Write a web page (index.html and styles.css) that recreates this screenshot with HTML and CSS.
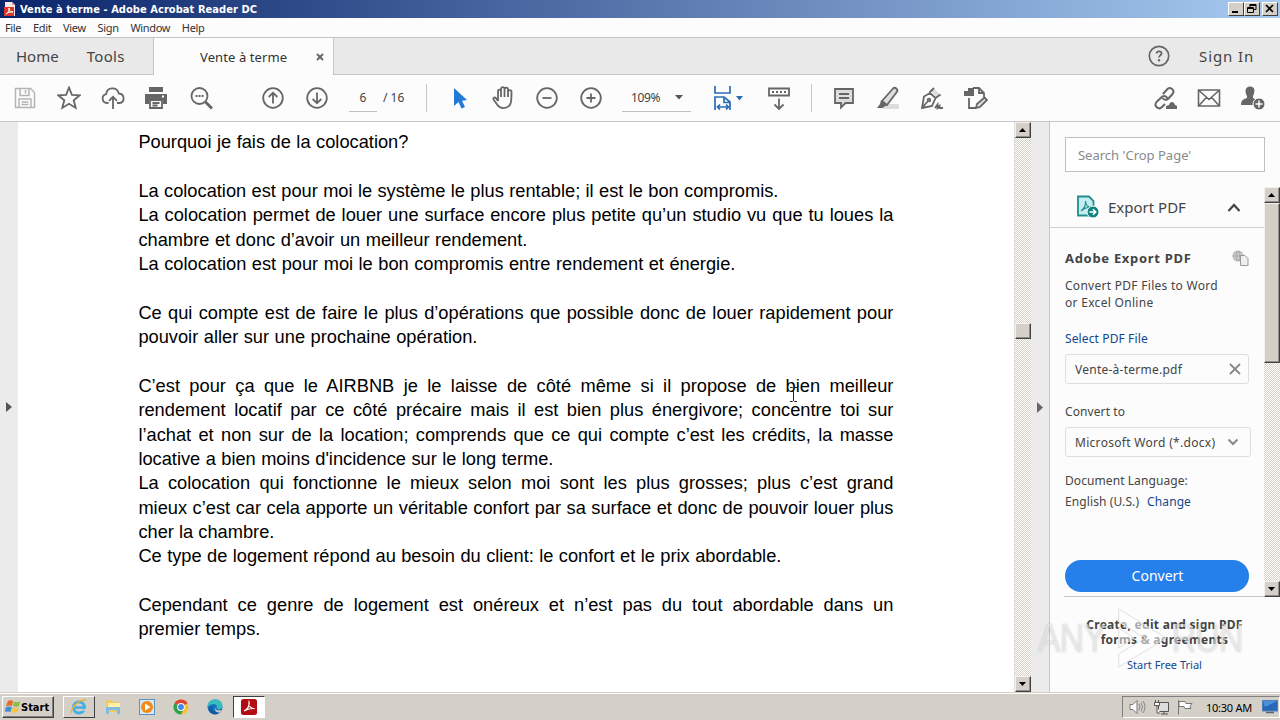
FILE: index.html
```html
<!DOCTYPE html>
<html lang="fr">
<head>
    <meta charset="UTF-8">
    <title>Vente à terme - Adobe Acrobat Reader DC</title>
    <link rel="stylesheet" href="styles.css">
</head>
<body>

    <!-- Window title -->
    <div class="titlebar">
        <svg class="app-icon" width="12" height="16" viewBox="0 0 12 16"><path d="M1 1h7l3 3v11H1z" fill="#f7e9e7"/><path d="M8 1v3h3" fill="#d99"/><rect x="0" y="6" width="10" height="9" fill="#d8382c"/><path d="M2 13c3-2 3-4 3-6 0 3 1 4 4 4-3 0-5 0-7 2z" fill="none" stroke="#fff" stroke-width="1"/></svg>
        <span class="title">Vente à terme - Adobe Acrobat Reader DC</span>
        <div class="win-btns">
            <span class="win-btn"><svg width="14" height="12"><path d="M3 8h6v2H3z"/></svg></span>
            <span class="win-btn"><svg width="14" height="12"><path d="M5 1.500h6v5H9M5 2.500h6M5 1v3M3 5.500h6M2.500 4.500h6v5h-6z" fill="none" stroke="#000"/></svg></span>
            <span class="win-btn gap"><svg width="14" height="12"><path d="M3 2l7 7M10 2l-7 7" stroke="#000" stroke-width="1.700"/></svg></span>
        </div>
    </div>

    <div class="menubar">
        <span>File</span><span>Edit</span><span>View</span><span>Sign</span><span>Window</span><span>Help</span>
    </div>

    <!-- Tabs -->
    <div class="tabs">
        <div class="tab-left"><span class="t-home">Home</span><span class="t-tools">Tools</span></div>
        <div class="tab-active"><span class="t-doc">Vente à terme</span><svg class="t-close" width="8" height="8"><path d="M1 1l6 6M7 1L1 7" stroke="#666" stroke-width="1.900"/></svg></div>
        <div class="tab-right">
            <svg width="22" height="22" viewBox="0 0 22 22"><circle cx="11" cy="11" r="9.700" fill="none" stroke="#666" stroke-width="1.700"/><path d="M8.500 8.500c.3-3 5.200-2.800 5 .1-.1 1.800-2.500 1.900-2.500 4" fill="none" stroke="#666" stroke-width="1.800"/><circle cx="11" cy="15.200" r="1.200" fill="#666"/></svg>
            <span class="t-signin">Sign In</span>
        </div>
    </div>

    <!-- Toolbar -->
    <div class="toolbar">
        <span class="tool light"><svg viewBox="0 0 24 24"><path d="M2.500 2.500h15l4 4v15h-19zM7 2.500v7h9v-7M12.500 4v3.500M6 21v-8h12v8M8.500 16h7M8.500 18.500h7"/></svg></span>
        <span class="tool"><svg viewBox="0 0 24 24"><path d="M12 1.500l2.900 7.300 7.800.5-6 5 2 7.600-6.700-4.200-6.700 4.200 2-7.600-6-5 7.800-.5z"/></svg></span>
        <span class="tool"><svg viewBox="0 0 24 24"><path d="M7.500 17H6a4.500 4.500 0 0 1-.8-8.900C6 .8 16 .5 17.800 7.500 24 8 24 16.500 18.500 17H16M12 23V11M8 14.800l4-4 4 4"/></svg></span>
        <span class="tool print"><svg viewBox="0 0 24 24"><path class="fill" d="M5 1h14v5H5zM1 8h22v10h-4v-4H5v4H1z"/><path d="M6 14h12v8H6zM8.500 17h7M8.500 19.500h5"/><path d="M18 10.500h2" stroke="#fff"/></svg></span>
        <span class="tool"><svg viewBox="0 0 24 24"><circle cx="10.500" cy="10" r="8"/><path d="M16.500 16l6.500 6.500" stroke-width="3"/><path d="M6.500 10h2m1 0h2m1 0h2" stroke-width="2"/></svg></span>
        <span class="tool up"><svg viewBox="0 0 24 24"><circle cx="12" cy="12" r="9.800"/><path d="M12 17.500V7M7.700 11L12 6.700l4.300 4.300"/></svg></span>
        <span class="tool"><svg viewBox="0 0 24 24"><circle cx="12" cy="12" r="9.800"/><path d="M12 6.500V17M7.700 13l4.300 4.300 4.300-4.300"/></svg></span>
        <span class="page-no">6</span>
        <span class="page-total">/ 16</span>
        <span class="divider first"></span>
        <span class="tool arrow"><svg viewBox="0 0 24 24"><path d="M7 2v18l4.500-4 3 6.500 3.500-1.600-3-6.200 5-.7z" fill="#2279d8" stroke="none"/></svg></span>
        <span class="tool hand"><svg viewBox="0 0 24 24"><path d="M6 15V5.500c0-2.500 3-2.500 3 0V11M9 11V3c0-2.500 3.500-2.500 3.500 0v8M12.500 11V3.500c0-2.500 3.500-2.500 3.500 0V11M16 11V6c0-2.500 3.500-2.500 3.500 0 0 3 0 6.500-.5 9.500-1 8-10.500 8-13.500 3.500L1.800 14c-1.300-2.300.8-3.300 2.300-1.700L6 15"/></svg></span>
        <span class="tool"><svg viewBox="0 0 24 24"><circle cx="12" cy="12" r="9.800"/><path d="M7.500 12h9"/></svg></span>
        <span class="tool"><svg viewBox="0 0 24 24"><circle cx="12" cy="12" r="9.800"/><path d="M7.500 12h9M12 7.500v9"/></svg></span>
        <span class="zoom"><span class="zoom-val">109%</span><svg width="8" height="5"><path d="M0 0h8L4 4.500z" fill="#555"/></svg></span>
        <span class="fit"><svg width="32" height="26" viewBox="0 0 32 26"><path d="M3 1v7h15V1M3 25V12h9l6 5v8M12 12v5.500h6M5.500 22h11M8 19.500L5.500 22 8 24.500M14 19.500l2.500 2.500-2.500 2.500" fill="none" stroke="#2b6cb5" stroke-width="1.700"/><path d="M24 11h7l-3.500 4.500z" fill="#2b6cb5"/></svg></span>
        <span class="tool scroll"><svg viewBox="0 0 24 24"><path d="M2 2.500h20v7H2zM12 12.500V23M7.500 18.500l4.500 4.500 4.500-4.500"/><path d="M5 6h2m2 0h2m2 0h2m2 0h2"/></svg></span>
        <span class="divider"></span>
        <span class="tool cmt"><svg viewBox="0 0 24 24"><path d="M3 3h18v14h-7.500L9 21.500V17H3z" fill="#ddd"/><path d="M7 8h10M7 12h10"/></svg></span>
        <span class="tool"><svg viewBox="0 0 24 24"><path d="M10 18h13v5H6z" fill="#ddd" stroke="none"/><path d="M6 15L17 2.500c2-2 5.500 1 4 3.200L11 19z" fill="#ddd"/><path class="fill" d="M5 14l6.500 5-3 1.500L6.500 22H1l3-4z"/></svg></span>
        <span class="tool"><svg viewBox="0 0 24 24"><path d="M14 2.500l6 6-4 2-5-5z" fill="#ddd" stroke="none"/><path d="M2 22l2-11.500 6-3.500 5.500 5L12 20zM2 22l6-7M9.500 6.500L14 2M15.500 12l5-3.500M15 22l2.500-3.500V22l2-2v2H23"/><circle cx="9" cy="14" r="1.300"/></svg></span>
        <span class="tool"><svg viewBox="0 0 24 24"><path d="M9 2h6l5 5v4M15 2v5h5M5 12v10h7"/><path class="fill" d="M4 2h6v8H0V5h4z"/><path d="M12 22l1-4 7.500-6.500 2.500 2.500-7 7z" fill="#ddd"/></svg></span>
        <span class="tool link"><svg viewBox="0 0 24 24"><path d="M10 8l4-4.500c3-3.500 8.500.5 5.500 4.500l-4 4.500c-2 2-4.500 1.500-6-.5M14.500 12c-2-2.500-4.500-2.500-6-.8L3.500 16c-3 4 2 8.500 5.500 5l3-3" stroke-width="2"/><path class="fill" d="M13 23v-3l3-1c1-4 5-4 6 0l2.500 1v3z"/></svg></span>
        <span class="tool"><svg viewBox="0 0 24 24"><path d="M1.500 4h21v16h-21zM2 4.500l10 9 10-9M2 19.500l7.500-8.300M22 19.500l-7.500-8.300" stroke-width="1.600"/></svg></span>
        <span class="tool"><svg viewBox="0 0 24 24"><path class="fill" d="M9 .5c5 0 5.500 5 3 9.500v2l4 2-4 5H0c0-5 2-5.500 6-7v-2C3.500 6 4 .5 9 .5z"/><circle cx="18" cy="18" r="6" fill="#666" stroke="#fcfcfc" stroke-width="1"/><path d="M18 14.500v7M14.500 18h7" stroke="#fff" stroke-width="1.500"/></svg></span>
    </div>

    <!-- Document, scrollbar and tools pane -->
    <div class="main">
        <div class="rail"><svg width="6" height="10"><path d="M0 0v10l6-5z" fill="#555"/></svg></div>
        <div class="page">
            <p class="l w270">Pourquoi je fais de la colocation?</p>
            <p class="l">&nbsp;</p>
            <p class="l w640">La colocation est pour moi le système le plus rentable; il est le bon compromis.</p>
            <p class="l">La colocation permet de louer une surface encore plus petite qu’un studio vu que tu loues la</p>
            <p class="l w389">chambre et donc d’avoir un meilleur rendement.</p>
            <p class="l w597">La colocation est pour moi le bon compromis entre rendement et énergie.</p>
            <p class="l">&nbsp;</p>
            <p class="l">Ce qui compte est de faire le plus d’opérations que possible donc de louer rapidement pour</p>
            <p class="l w339">pouvoir aller sur une prochaine opération.</p>
            <p class="l">&nbsp;</p>
            <p class="l">C’est pour ça que le AIRBNB je le laisse de côté même si il propose de bien meilleur</p>
            <p class="l">rendement locatif par ce côté précaire mais il est bien plus énergivore; concentre toi sur</p>
            <p class="l">l’achat et non sur de la location; comprends que ce qui compte c’est les crédits, la masse</p>
            <p class="l w415">locative a bien moins d'incidence sur le long terme.</p>
            <p class="l">La colocation qui fonctionne le mieux selon moi sont les plus grosses; plus c’est grand</p>
            <p class="l">mieux c’est car cela apporte un véritable confort par sa surface et donc de pouvoir louer plus</p>
            <p class="l w136">cher la chambre.</p>
            <p class="l w643">Ce type de logement répond au besoin du client: le confort et le prix abordable.</p>
            <p class="l">&nbsp;</p>
            <p class="l">Cependant ce genre de logement est onéreux et n’est pas du tout abordable dans un</p>
            <p class="l w122">premier temps.</p>
            <svg class="ibeam" width="9" height="17"><path d="M1 1.500h2.500l1 1 1-1H8M4.500 2v13M1 15.500h2.500l1-1 1 1H8" fill="none" stroke="#222"/></svg>
        </div>
        <div class="scrollbar doc-scroll">
            <span class="sb-btn"><svg width="7" height="4"><path d="M0 4h7L3.500 0z"/></svg></span>
            <span class="sb-thumb"></span>
            <span class="sb-btn end"><svg width="7" height="4"><path d="M0 0h7L3.500 4z"/></svg></span>
        </div>
        <div class="rail right"><svg width="6" height="11"><path d="M0 0v11l6-5.500z" fill="#666"/></svg></div>

        <div class="pane">
            <div class="search">Search 'Crop Page'</div>
            <div class="pane-body">
                <div class="export">
                    <div class="export-head">
                        <svg width="24" height="24" viewBox="0 0 24 24"><path d="M2 1.500h11l4.500 4.500v14.500H2z" fill="#c4ecf2" stroke="#1f8f8c" stroke-width="1.800"/><path d="M5 16c4-3 5-6 4.500-10 .5 5 2 6 6 6-5 0-7 1-10.500 4" fill="none" stroke="#1f8f8c" stroke-width="1.200"/><circle cx="17" cy="17" r="6" fill="#128583" stroke="#f8f8f8"/><path d="M13.500 17h6M17 14.300l2.700 2.700-2.700 2.700" fill="none" stroke="#fff" stroke-width="1.600"/></svg>
                        <span class="s-export">Export PDF</span>
                        <svg class="chev" width="14" height="9"><path d="M1.500 8L7 2l5.500 6" fill="none" stroke="#444" stroke-width="2.200"/></svg>
                    </div>
                    <div class="export-title"><span>Adobe Export PDF</span>
                        <svg width="17" height="16" viewBox="0 0 17 16"><circle cx="6" cy="6" r="5.500" fill="#aaa"/><path d="M1 4h10M1 8h10M6 0v11M3.500 1q-2 5 0 10M8.500 1q2 5 0 10" fill="none" stroke="#ddd" stroke-width=".7"/><path d="M8.500 5.500h4.500l3 3v7H8.500z" fill="#eee" stroke="#999"/></svg>
                    </div>
                    <div class="row desc">Convert PDF Files to Word</div>
                    <div class="row desc2">or Excel Online</div>
                    <div class="row blue select">Select PDF File</div>
                    <div class="field"><span>Vente-à-terme.pdf</span><svg width="12" height="12"><path d="M1 1l10 10M11 1L1 11" stroke="#888" stroke-width="1.800"/></svg></div>
                    <div class="row conv">Convert to</div>
                    <div class="field wide"><span>Microsoft Word (*.docx)</span><svg width="12" height="8"><path d="M1.500 1.500L6 6l4.500-4.500" fill="none" stroke="#888" stroke-width="2"/></svg></div>
                    <div class="row lang">Document Language:</div>
                    <div class="row lang2"><span>English (U.S.)</span><span class="blue change">Change</span></div>
                    <div class="convert">Convert</div>
                </div>
                <div class="scrollbar pane-scroll">
                    <span class="sb-btn"><svg width="7" height="4"><path d="M0 4h7L3.500 0z"/></svg></span>
                    <span class="sb-thumb"></span>
                    <span class="sb-btn end"><svg width="7" height="4"><path d="M0 0h7L3.500 4z"/></svg></span>
                </div>
            </div>
            <div class="promo">
                <div class="bold">Create, edit and sign PDF</div>
                <div class="bold">forms &amp; agreements</div>
                <div class="trial">Start Free Trial</div>
            </div>
        </div>
    </div>

    <!-- Taskbar -->
    <div class="taskbar">
        <div class="start">
            <svg width="16" height="16" viewBox="0 0 16 16"><path d="M3 2q3-1.500 5 0L7 7Q4 6 1 7z" fill="#e8692c"/><path d="M9 2.500q3 1.500 6 0L14 7q-3 1.500-6 0z" fill="#8bbd45"/><path d="M1 8q3-1 6 0l-1.500 5Q3 12-.5 13z" fill="#3f8fd6"/><path d="M8 8.500q3 1.500 6 0L12.500 13q-3 1.500-6 0z" fill="#f6c33b"/></svg>
            <span>Start</span>
        </div>
        <div class="task raised"><svg width="18" height="18" viewBox="0 0 18 18"><circle cx="9" cy="9.500" r="5.500" fill="none" stroke="#42aee8" stroke-width="3"/><path d="M5 9.500h9" stroke="#42aee8" stroke-width="2.500"/><path d="M11 12h5v-1.500" stroke="#d4d0c8" stroke-width="1.500" fill="none"/><path d="M2 15C-1 11 11 0 16 2" fill="none" stroke="#f0b52c" stroke-width="1.500"/></svg></div>
        <div class="task"><svg width="18" height="18" viewBox="0 0 18 18"><path d="M2 2h6l1 2h6v10H2z" fill="#edca68"/><path d="M4 5h12v4H4z" fill="#fff0a8"/><path d="M2 9h14v7h-3v-4H5v4H2z" fill="#80bce2"/></svg></div>
        <div class="task"><svg width="18" height="18" viewBox="0 0 18 18"><rect x="1.500" y="1.500" width="15" height="15" fill="#d7e9f8" stroke="#5b91c3"/><circle cx="9" cy="9" r="6" fill="#f18a16"/><path d="M7 5.500v7l5.500-3.500z" fill="#fff"/></svg></div>
        <div class="task"><svg width="18" height="18" viewBox="0 0 18 18"><circle cx="9" cy="9" r="7.500" fill="#f5c32c"/><path d="M9 9L2.500 5.200a7.500 7.500 0 0 1 13 0z" fill="#dd4335"/><path d="M2.500 5.200A7.500 7.500 0 0 0 9 16.500L12 10.500 9 9z" fill="#31a04f"/><circle cx="9" cy="9" r="3.900" fill="#fff"/><circle cx="9" cy="9" r="2.900" fill="#4285e8"/></svg></div>
        <div class="task"><svg width="18" height="18" viewBox="0 0 18 18"><circle cx="9" cy="9" r="7.500" fill="#1672bd"/><path d="M1.500 9C1.500-1 16.500-1 16.500 8c0 4-5 4-6 2 2-4-4-6-9-1z" fill="#38bcc0"/><path d="M7 9c-2 3 1 6 7 5-5 5-11 1-11-3 0-2 2-3 4-2z" fill="#1558a0"/><path d="M10 9.500c-1 3 2 3.500 5.500 2.500l-1.500 2.500c-4 0-6-2-4-5z" fill="#d4d0c8"/></svg></div>
        <div class="task active"><svg width="16" height="16" viewBox="0 0 16 16"><rect width="16" height="16" rx="2.500" fill="#b30b12"/><path d="M3 12c4-2 6-6 5-9-1 4 2 7 5.500 6.500C10 9 6 10 3 12z" fill="none" stroke="#fff" stroke-width="1.200"/></svg></div>
        <div class="tray">
            <svg width="17" height="16" viewBox="0 0 17 16"><path d="M1 5.500h3l4-4v13l-4-4H1z" fill="#fff" stroke="#777"/><path d="M10 5q2 3 0 6M12 3.500q3 4.500 0 9M14 2q4 6 0 12" fill="none" stroke="#888"/></svg>
            <svg width="17" height="16" viewBox="0 0 17 16"><path d="M5.500 3.500h10v9h-10zM8 15h7M11 12.500V15" fill="#ddd" stroke="#555"/><path d="M1.500 3.500h5v3h-5zM2.500 1v2.500M5.500 1v2.500M4 7v7h3" fill="#fff" stroke="#555"/></svg>
            <svg width="17" height="16" viewBox="0 0 17 16"><path d="M1.500 1v14.500M2 2.500h6l1 2h6l-2 3 1 2H8l-1-2H2z" fill="#fff" stroke="#777"/></svg>
            <span class="clock">10:30 AM</span>
            <svg width="16" height="14" viewBox="0 0 16 14"><rect x=".5" y=".5" width="15" height="10.500" fill="#2868b7" stroke="#4d83bd"/><path d="M1 1h14L3 7z" fill="#4b92db"/><path d="M4 12.500h8" stroke="#567" stroke-width="1.500"/></svg>
        </div>
    </div>

    <!-- Watermark -->
    <div class="watermark">
        <span>ANY</span>
        <svg width="78" height="64" viewBox="0 0 78 64"><path d="M16 3l56 29-56 29V48l31-16-31-16z" fill="#fff" fill-opacity=".55" stroke="#ddd"/><path d="M16 22l18 10-18 10z" fill="#fff" fill-opacity=".5" stroke="#ddd"/></svg>
        <span>RUN</span>
    </div>

</body>
</html>
```
FILE: styles.css
```css
body {
    margin: 0;
    width: 1280px;
    height: 720px;
    overflow: hidden;
    position: relative;
    display: flex;
    flex-direction: column;
    background: #fcfcfc;
    font-family: "Noto Sans", sans-serif;
    font-size: 12px;
    color: #444;
}

span {
    white-space: nowrap;
}

svg {
    display: block;
    flex: none;
}

/* Title bar */
.titlebar {
    height: 18px;
    display: flex;
    align-items: center;
    background: linear-gradient(to right, #0a246a, #a6caf0);
    color: #fff;
}

.app-icon {
    margin-left: 4px;
}

.title {
    margin-left: 4px;
    font: bold 11px "DejaVu Sans Condensed", "DejaVu Sans", sans-serif;
    letter-spacing: 0.06px;
}

.win-btns {
    display: flex;
    margin-left: auto;
    padding-right: 2px;
}

.win-btn {
    width: 14px;
    height: 12px;
    background: #d4d0c8;
    border: 1px solid;
    border-color: #fff #404040 #404040 #fff;
}

.win-btn.gap {
    margin-left: 2px;
}

.menubar {
    height: 19px;
    display: flex;
    align-items: center;
    padding-left: 5px;
    font-size: 11px;
    letter-spacing: -0.35px;
    border-bottom: 1px solid #c4c4c4;
    color: #333;
}

.menubar span {
    margin-right: 11.8px;
}

/* Tabs */
.tabs {
    height: 37px;
    display: flex;
}

.tab-left,
.tab-right {
    box-sizing: border-box;
    background: #e9e9e9;
    border-bottom: 1px solid #c6c6c6;
    display: flex;
    align-items: center;
    font-size: 15px;
}

.tab-left {
    width: 154px;
    padding-left: 16px;
    border-right: 1px solid #c6c6c6;
}

.t-tools {
    margin-left: 28px;
    letter-spacing: 0.3px;
}

.tab-active {
    width: 179px;
    display: flex;
    align-items: center;
    font-size: 13px;
    letter-spacing: 0.1px;
    color: #333;
}

.t-doc {
    margin-left: 46px;
    width: 88px;
}

.t-close {
    margin-left: 28px;
}

.tab-right {
    flex: 1;
    border-left: 1px solid #c6c6c6;
    justify-content: flex-end;
    padding-right: 26px;
}

.t-signin {
    margin-left: 29px;
    width: 55px;
    letter-spacing: 0.9px;
}

/* Toolbar */
.toolbar {
    height: 46px;
    display: flex;
    align-items: center;
    padding-left: 3px;
    border-bottom: 1px solid #c6c6c6;
}

.tool {
    width: 44px;
    flex: none;
    display: flex;
    justify-content: center;
}

.tool svg {
    width: 24px;
    height: 24px;
    fill: none;
    stroke: #666;
    stroke-width: 1.8;
}

.tool .fill {
    fill: #666;
    stroke: none;
}

.tool.light svg {
    stroke: #b4b4b4;
    stroke-width: 1.5;
}

.tool.print svg {
    margin-right: 2px;
}

.tool.hand svg {
    margin-left: 2px;
}

.tool.up {
    margin-left: 28px;
}

.page-no {
    margin-left: 10px;
    width: 28px;
    height: 26px;
    line-height: 26px;
    text-align: center;
    border-bottom: 1px solid #c0c0c0;
}

.page-total {
    width: 43px;
    padding-left: 6px;
    padding-bottom: 1px;
}

.divider {
    width: 1px;
    height: 28px;
    background: #c6c6c6;
    margin-left: 10px;
}

.divider.first {
    margin-left: 0;
}

.tool.arrow {
    margin-left: 10px;
}

.zoom {
    margin-left: 9px;
    width: 60px;
    height: 26px;
    padding-left: 9px;
    display: flex;
    align-items: center;
    border-bottom: 1px solid #c0c0c0;
}

.zoom-val {
    width: 44px;
    letter-spacing: -0.4px;
}

.fit {
    margin-left: 21px;
    width: 31px;
}

.tool.scroll {
    margin-left: 14px;
}

.tool.cmt {
    margin-left: 10px;
}

.tool.link {
    margin-left: 145px;
}

/* Document */
.main {
    height: 570px;
    display: flex;
}

.rail {
    width: 18px;
    background: #ebebeb;
    display: flex;
    align-items: center;
    padding-left: 6px;
    box-sizing: border-box;
}

.page {
    width: 875.6px;
    padding: 8.4px 0 0 120.4px;
    height: 561.6px;
    background: #fff;
    position: relative;
}

.l {
    margin: 0;
    width: 755px;
    height: 24.35px;
    line-height: 24.35px;
    font-family: "Liberation Sans", Arial, sans-serif;
    font-size: 18.25px;
    color: #000;
    white-space: nowrap;
    text-align-last: justify;
}

/* Last lines of the paragraphs */
.w270 { width: 270px; }
.w640 { width: 640px; }
.w389 { width: 389px; }
.w597 { width: 597px; }
.w339 { width: 339px; }
.w415 { width: 415px; }
.w136 { width: 136px; }
.w643 { width: 643px; }
.w122 { width: 122px; }

.ibeam {
    position: absolute;
    left: 771px;
    top: 264px;
}

/* Scrollbars */
.scrollbar {
    width: 16px;
    display: flex;
    flex-direction: column;
    background: repeating-conic-gradient(#fff 0 25%, #d4d0c8 0 50%) 0 0 / 2px 2px;
}

.doc-scroll {
    border-left: 1px solid #ddd;
}

.sb-btn,
.sb-thumb {
    box-sizing: border-box;
    width: 16px;
    height: 16px;
    background: #d4d0c8;
    border: 1px solid;
    border-color: #f4f2ee #404040 #404040 #f4f2ee;
    box-shadow: inset -1px -1px #909090;
    display: flex;
    align-items: center;
    justify-content: center;
}

.sb-btn.end {
    margin-top: auto;
}

.doc-scroll .sb-thumb {
    margin-top: 185px;
}

.pane-scroll .sb-thumb {
    height: 160px;
}

/* Tools pane */
.pane {
    width: 230px;
    border-left: 1px solid #c6c6c6;
}

.search {
    margin: 15px 0 0 15px;
    width: 198px;
    height: 33px;
    line-height: 35px;
    border: 1px solid #c0c0c0;
    background: #fff;
    font-size: 13px;
    color: #8a8a8a;
    text-indent: 12px;
}

.pane-body {
    margin-top: 15px;
    height: 410px;
    display: flex;
}

.export {
    width: 214px;
}

.export-head {
    height: 40px;
    display: flex;
    align-items: center;
    padding-left: 26px;
    border-bottom: 1px solid #d0d0d0;
    font-size: 15px;
}

.s-export {
    margin-left: 8px;
    width: 77px;
}

.chev {
    margin-left: 42px;
}

.export-title {
    display: flex;
    align-items: center;
    justify-content: space-between;
    height: 20px;
    margin: 20px 15px 0;
    font-size: 13px;
    font-weight: bold;
    letter-spacing: 0.7px;
}

.row {
    padding-left: 15px;
    height: 17px;
    line-height: 17px;
}

.blue {
    color: #12488c;
}

.desc {
    margin-top: 9px;
    letter-spacing: 0.28px;
}

.desc2 {
    letter-spacing: 0.3px;
}

.select {
    margin-top: 19px;
    letter-spacing: 0.12px;
}

.field {
    margin: 7px 0 0 15px;
    width: 166px;
    height: 28px;
    padding: 0 7px 0 9px;
    border: 1px solid #dedede;
    border-radius: 3px;
    display: flex;
    align-items: center;
    justify-content: space-between;
    letter-spacing: 0.25px;
}

.field.wide {
    width: 164px;
    padding-right: 11px;
    letter-spacing: 0.3px;
}

.conv {
    margin-top: 19px;
    letter-spacing: 0.1px;
}

.lang {
    margin-top: 15px;
    letter-spacing: 0.08px;
}

.lang2 {
    margin-top: 4px;
    letter-spacing: 0.1px;
}

.change {
    margin-left: 8px;
}

.convert {
    margin: 50px 0 0 15px;
    width: 184px;
    height: 32px;
    line-height: 32px;
    border-radius: 16px;
    background: #2680eb;
    color: #fff;
    font-size: 14px;
    text-align: center;
    text-indent: 1px;
}

.promo {
    margin: -1px 0 0 14px;
    width: 201px;
    border-top: 1px solid #c6c6c6;
    padding-top: 20px;
    text-align: center;
}

.bold {
    font-weight: bold;
    height: 15px;
    line-height: 15px;
    letter-spacing: 0.28px;
}

.trial {
    margin-top: 10px;
    font-size: 11px;
    color: #12488c;
}

/* Taskbar */
.taskbar {
    box-sizing: border-box;
    height: 28px;
    background: #d4d0c8;
    border-top: 1px solid #d4d0c8;
    box-shadow: inset 0 1px #fff;
    display: flex;
    padding: 3px 0 0 2px;
    color: #000;
}

.start {
    box-sizing: border-box;
    width: 52px;
    height: 22px;
    padding-left: 2px;
    display: flex;
    align-items: center;
    border: 1px solid;
    border-color: #fff #404040 #404040 #fff;
    box-shadow: inset -1px -1px #808080;
    font: bold 11px "DejaVu Sans Condensed", "DejaVu Sans", sans-serif;
    margin-right: 9px;
}

.task {
    box-sizing: border-box;
    width: 32px;
    height: 22px;
    margin-right: 2px;
    display: flex;
    align-items: center;
    justify-content: center;
}

.raised {
    border: 1px solid;
    border-color: #fff #404040 #404040 #fff;
}

.active {
    background: #fff;
    border: 1px solid;
    border-color: #404040 #fff #fff #404040;
}

.tray {
    box-sizing: border-box;
    width: 158px;
    height: 22px;
    margin-left: auto;
    border: 1px solid;
    border-color: #808080 #fff #fff #808080;
    display: flex;
    align-items: center;
    gap: 7px;
    padding-left: 6px;
}

.clock {
    width: 49px;
    margin-left: 5px;
    font-size: 11px;
    letter-spacing: -0.25px;
}

/* Watermark */
.watermark {
    position: absolute;
    left: 1038px;
    top: 606px;
    display: flex;
    align-items: center;
    transform: scaleX(0.85);
    transform-origin: left;
    font: 40px "Liberation Sans", Arial, sans-serif;
    letter-spacing: -1px;
    color: rgba(255, 255, 255, 0.55);
    text-shadow: 0 0 2px rgba(0, 0, 0, 0.22);
}
```
